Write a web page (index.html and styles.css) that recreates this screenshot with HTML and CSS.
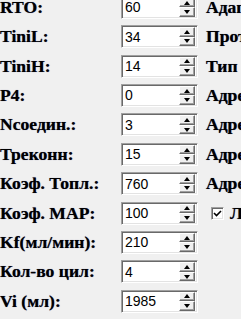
FILE: index.html
```html
<!DOCTYPE html>
<html>
<head>
<meta charset="utf-8">
<link rel="stylesheet" href="styles.css">
</head>
<body>
<div class="form">
  <span class="lbl">RTO:</span>
  <div class="spin"><span class="val">60</span><div class="btns"><span class="btn"><i class="up"></i></span><span class="btn"><i class="dn"></i></span></div></div>
  <span class="rlbl">Адаптация</span>

  <span class="lbl">TiniL:</span>
  <div class="spin"><span class="val">34</span><div class="btns"><span class="btn"><i class="up"></i></span><span class="btn"><i class="dn"></i></span></div></div>
  <span class="rlbl">Протокол</span>

  <span class="lbl">TiniH:</span>
  <div class="spin"><span class="val">14</span><div class="btns"><span class="btn"><i class="up"></i></span><span class="btn"><i class="dn"></i></span></div></div>
  <span class="rlbl">Тип инжектора</span>

  <span class="lbl">P4:</span>
  <div class="spin"><span class="val">0</span><div class="btns"><span class="btn"><i class="up"></i></span><span class="btn"><i class="dn"></i></span></div></div>
  <span class="rlbl">Адрес 1</span>

  <span class="lbl">Ncоедин.:</span>
  <div class="spin"><span class="val">3</span><div class="btns"><span class="btn"><i class="up"></i></span><span class="btn"><i class="dn"></i></span></div></div>
  <span class="rlbl">Адрес 2</span>

  <span class="lbl">Треконн:</span>
  <div class="spin"><span class="val">15</span><div class="btns"><span class="btn"><i class="up"></i></span><span class="btn"><i class="dn"></i></span></div></div>
  <span class="rlbl">Адрес 3</span>

  <span class="lbl">Коэф. Топл.:</span>
  <div class="spin"><span class="val">760</span><div class="btns"><span class="btn"><i class="up"></i></span><span class="btn"><i class="dn"></i></span></div></div>
  <span class="rlbl">Адрес 4</span>

  <span class="lbl">Коэф. MAP:</span>
  <div class="spin"><span class="val">100</span><div class="btns"><span class="btn"><i class="up"></i></span><span class="btn"><i class="dn"></i></span></div></div>
  <span class="rlbl chk"><span class="box"><svg width="9" height="9" viewBox="0 0 9 9"><path d="M1 4 L3.5 6.5 L8 2" fill="none" stroke="#000" stroke-width="1.6"/></svg></span>Логирование</span>

  <span class="lbl">Kf(мл/мин):</span>
  <div class="spin"><span class="val">210</span><div class="btns"><span class="btn"><i class="up"></i></span><span class="btn"><i class="dn"></i></span></div></div>
  <span class="rlbl"></span>

  <span class="lbl">Кол-во цил:</span>
  <div class="spin"><span class="val">4</span><div class="btns"><span class="btn"><i class="up"></i></span><span class="btn"><i class="dn"></i></span></div></div>
  <span class="rlbl"></span>

  <span class="lbl">Vi (мл):</span>
  <div class="spin"><span class="val">1985</span><div class="btns"><span class="btn"><i class="up"></i></span><span class="btn"><i class="dn"></i></span></div></div>
  <span class="rlbl"></span>
</div>
</body>
</html>
```

FILE: styles.css
```css
html, body {
  margin: 0;
  padding: 0;
  background: #f0f0f0;
  overflow: hidden;
  width: 241px;
  height: 319px;
}

.form {
  display: grid;
  grid-template-columns: 113px 77px max-content;
  grid-auto-rows: 29.4px;
  column-gap: 8px;
  align-items: center;
  margin-top: -7.4px;
  white-space: nowrap;
}

.lbl, .rlbl {
  font-family: "Liberation Serif", "Times New Roman", serif;
  font-weight: bold;
  font-size: 17.6px;
  color: #000;
  text-shadow: 0 0 0.7px rgba(0, 0, 90, 0.7);
}

.spin {
  box-sizing: border-box;
  height: 23px;
  background: #fff;
  border-top: 1px solid #a0a0a0;
  border-left: 1px solid #a0a0a0;
  border-right: 1px solid #fff;
  border-bottom: 1px solid #fff;
  box-shadow: inset 1px 1px 0 #696969, inset -1px -1px 0 #e3e3e3;
  display: flex;
  align-items: center;
  padding: 1px 1px 1px 3px;
}

.val {
  flex: 1;
  font-family: "Liberation Sans", Arial, sans-serif;
  font-size: 14px;
  color: #000;
}

.btns {
  align-self: stretch;
  width: 16px;
  display: flex;
  flex-direction: column;
  margin-right: 1px;
}

.btn {
  flex: 1;
  box-sizing: border-box;
  background: #f0f0f0;
  border-top: 1px solid #fff;
  border-left: 1px solid #fff;
  border-right: 1px solid #696969;
  border-bottom: 1px solid #696969;
  box-shadow: inset -1px -1px 0 #a0a0a0;
  display: flex;
  align-items: center;
  justify-content: center;
}

.up, .dn {
  width: 0;
  height: 0;
  border-left: 3.5px solid transparent;
  border-right: 3.5px solid transparent;
}

.up {
  border-bottom: 4px solid #000;
}

.dn {
  border-top: 4px solid #000;
}

.chk {
  display: flex;
  align-items: center;
}

.box {
  box-sizing: border-box;
  width: 13px;
  height: 13px;
  margin-left: 5px;
  margin-right: 6px;
  background: #fff;
  border-top: 1px solid #a0a0a0;
  border-left: 1px solid #a0a0a0;
  border-right: 1px solid #fff;
  border-bottom: 1px solid #fff;
  box-shadow: inset 1px 1px 0 #696969, inset -1px -1px 0 #e3e3e3;
  display: flex;
  align-items: center;
  justify-content: center;
}
```
